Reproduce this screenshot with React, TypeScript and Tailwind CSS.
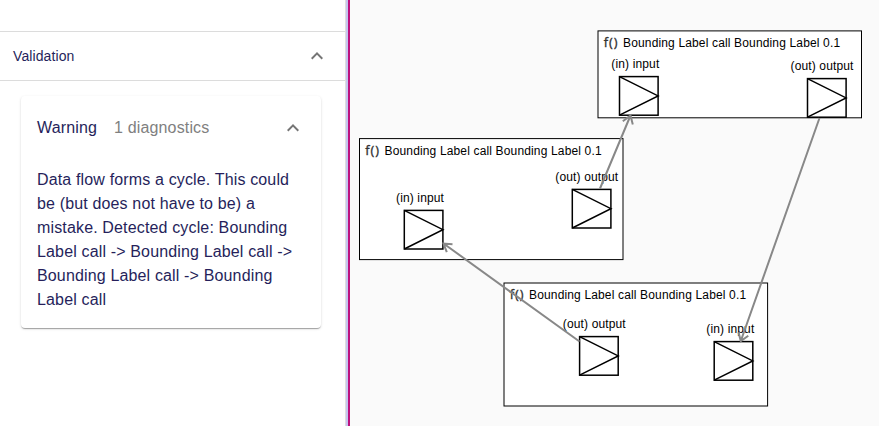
type Port = { x: number; y: number; label: string; labelX: number; labelY: number };
type CallNode = { x: number; y: number; w: number; h: number; ports: Port[] };

const TITLE = 'Bounding Label call Bounding Label 0.1';

const nodes: CallNode[] = [
  {
    x: 598, y: 30.9, w: 263.5, h: 86.9,
    ports: [
      { x: 619.5, y: 76.6, label: '(in) input', labelX: 611.3, labelY: 68 },
      { x: 807.5, y: 78.6, label: '(out) output', labelX: 790.5, labelY: 70 },
    ],
  },
  {
    x: 359.5, y: 138.6, w: 263.5, h: 121,
    ports: [
      { x: 404.3, y: 210.4, label: '(in) input', labelX: 396, labelY: 202 },
      { x: 572.3, y: 189.4, label: '(out) output', labelX: 555.3, labelY: 181 },
    ],
  },
  {
    x: 504, y: 283, w: 263.6, h: 123,
    ports: [
      { x: 579.6, y: 336.6, label: '(out) output', labelX: 562.8, labelY: 328 },
      { x: 714.2, y: 341.6, label: '(in) input', labelX: 706.3, labelY: 333 },
    ],
  },
];

const edges = [
  'M600 188.5L630.5 115.5M622.8 121.2L630.5 115.5L632.8 124.5',
  'M819.5 118L740.8 341M738.5 332.3L740.8 341L748.3 335.8',
  'M579.5 341.5L443.5 243.5M452.5 244.2L443.5 243.5L446.8 252.2',
];

function Chevron() {
  return (
    <svg className="size-6 shrink-0 text-[#757575]" viewBox="0 0 24 24" fill="currentColor">
      <path d="M12 8l-6 6 1.41 1.41L12 10.83l4.59 4.58L18 14z" />
    </svg>
  );
}

function PortShape({ port }: { port: Port }) {
  return (
    <g>
      <text x={port.labelX} y={port.labelY} fontSize="12" fill="#000" letterSpacing="0.14">{port.label}</text>
      <g transform={`translate(${port.x} ${port.y})`} fill="none" stroke="#000" strokeWidth="1.5">
        <rect width="38.6" height="38.6" />
        <path d="M0 0L38.6 19.3L0 38.6" />
      </g>
    </g>
  );
}

function Diagram() {
  return (
    <svg className="block h-full w-full font-['Liberation_Sans',Arial,sans-serif]" viewBox="350 0 529 426">
      {nodes.map((n) => (
        <g key={n.x}>
          <rect x={n.x} y={n.y} width={n.w} height={n.h} fill="#fff" stroke="#000" strokeWidth="1" />
          <text x={n.x + 5.8} y={n.y + 16.4} fontSize="12.5" fill="#333" stroke="#333" strokeWidth="0.3" letterSpacing="0.9" className="font-['Noto_Sans',sans-serif]">f()</text>
          <text x={n.x + 25} y={n.y + 16.1} fontSize="12" fill="#000" letterSpacing="0.15">{TITLE}</text>
          {n.ports.map((p) => <PortShape key={p.x} port={p} />)}
        </g>
      ))}
      {edges.map((d) => <path key={d} d={d} fill="none" stroke="#888" strokeWidth="2" />)}
    </svg>
  );
}

export default function App() {
  return (
    <div className="flex h-[426px] w-[879px] overflow-hidden bg-white font-['Liberation_Sans',Arial,sans-serif] text-[#261f5b]">
      <aside className="flex w-[345px] shrink-0 flex-col pt-[31px]">
        <header className="flex h-[50px] items-center justify-between border-y border-[#dcdcdc] pr-4 pl-[13px]">
          <h2 className="text-sm tracking-[0.1px]">Validation</h2>
          <Chevron />
        </header>
        <section className="mt-[15px] ml-[21px] h-[232px] w-[300px] rounded bg-white px-4 tracking-[0.15px] shadow-[0_2px_1px_-1px_rgba(0,0,0,0.2),0_1px_1px_0_rgba(0,0,0,0.14),0_1px_3px_0_rgba(0,0,0,0.12)]">
          <div className="flex h-16 items-center text-base">
            <span>Warning</span>
            <span className="ml-[17px] text-[#808080]">1 diagnostics</span>
            <span className="ml-auto"><Chevron /></span>
          </div>
          <p className="mt-2 text-base leading-6">
            Data flow forms a cycle. This could be (but does not have to be) a mistake. Detected cycle: Bounding Label call -&gt; Bounding Label call -&gt; Bounding Label call -&gt; Bounding Label call
          </p>
        </section>
      </aside>
      <div className="w-[5px] shrink-0 border-r-2 border-l border-r-[#bd127e] border-l-[#dedede] bg-[#c5c5f0]" />
      <main className="min-w-0 flex-1 bg-[#fafafa]"><Diagram /></main>
    </div>
  );
}
